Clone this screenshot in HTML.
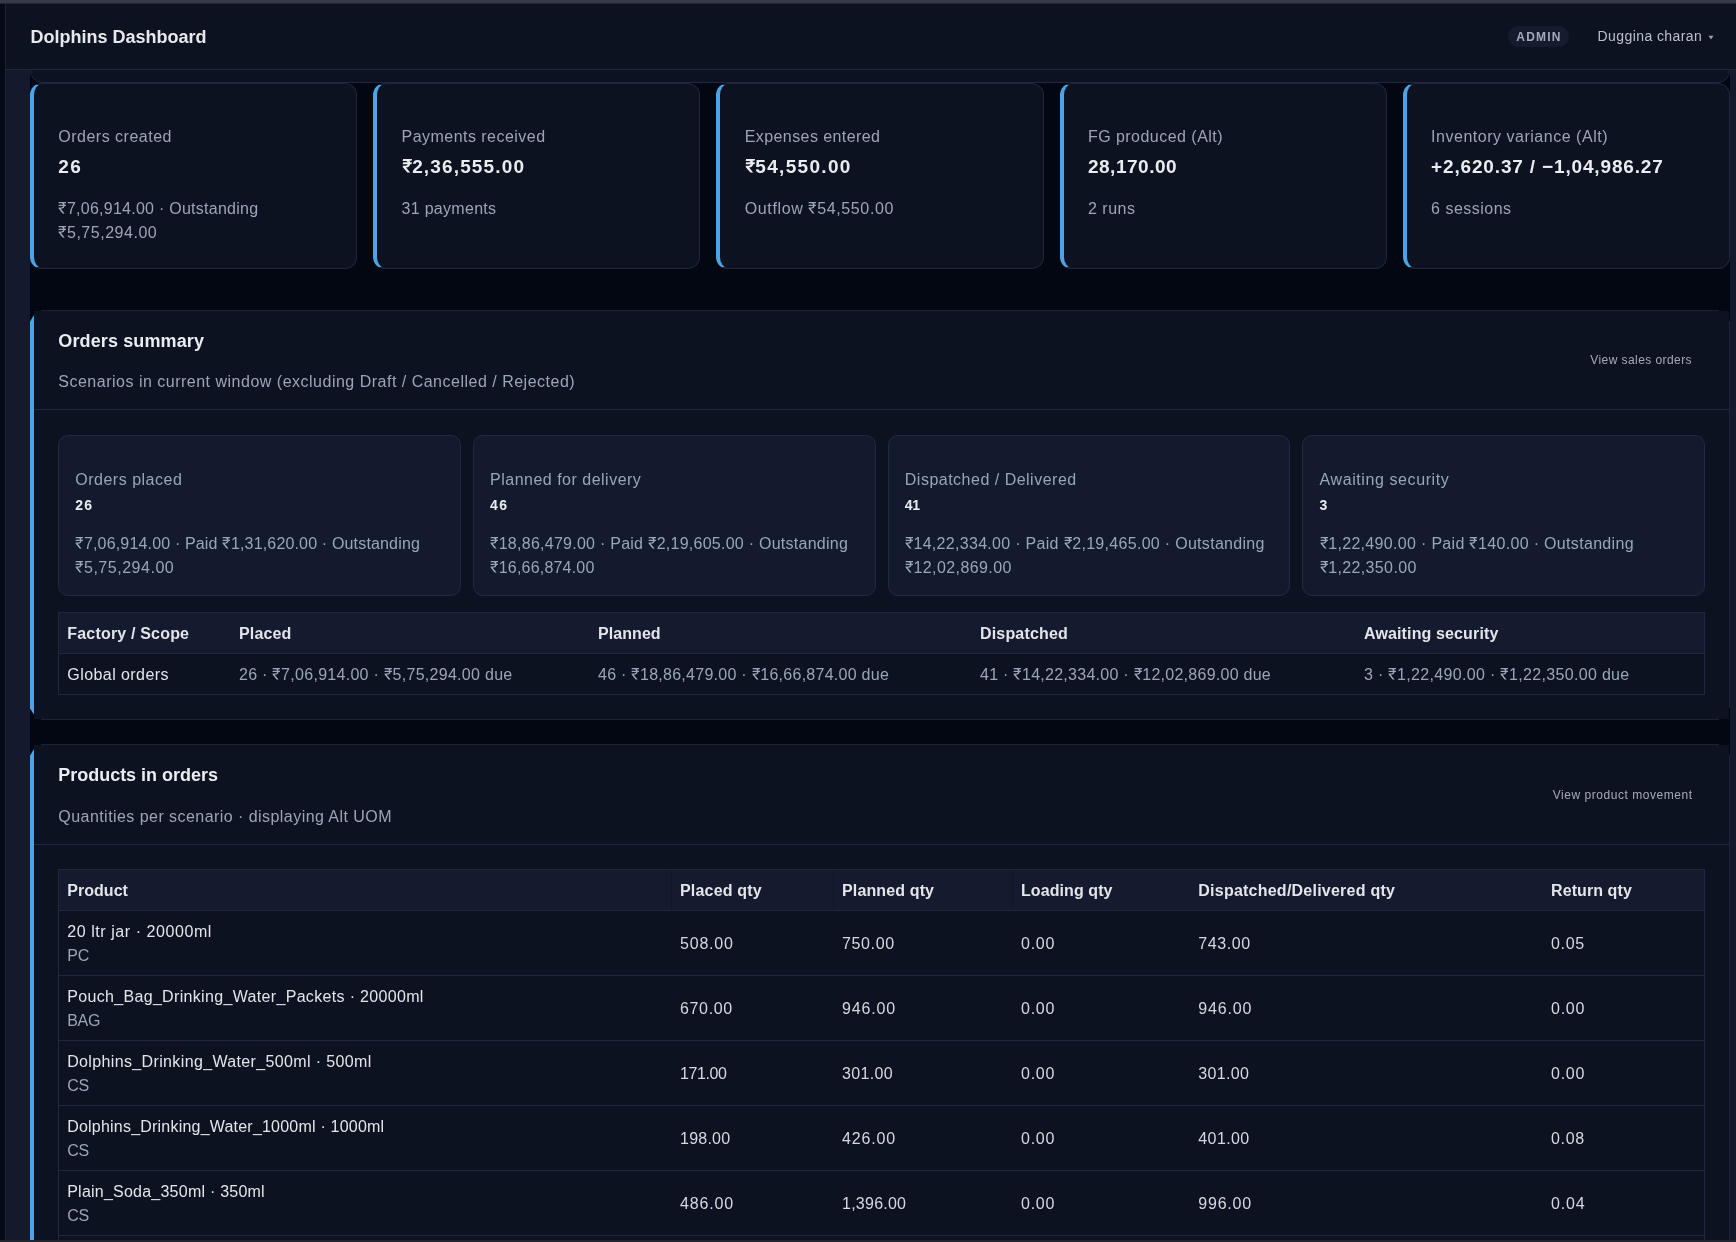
<!DOCTYPE html>
<html><head><meta charset="utf-8"><title>Dolphins Dashboard</title>
<style>
*{box-sizing:border-box;margin:0;padding:0}
html,body{width:1736px;height:1242px;overflow:hidden;background:#050a18;font-family:"Liberation Sans",sans-serif}
body{position:relative}
.a{position:absolute}
.t{position:absolute;white-space:nowrap}
svg.r{display:inline-block;vertical-align:baseline;fill:currentColor;overflow:visible}
.card{position:absolute;background:#0d1220;border:1px solid #1e2640;border-left:4px solid #4da3e6;border-radius:12px}
.sec{position:absolute;background:#0d1220;border:1px solid #1a2132;border-left:4px solid #4da3e6;border-radius:12px}
.stat{position:absolute;background:#141a2d;border:1px solid #212a42;border-radius:10px}
.blue{background:#4da3e6;clip-path:polygon(0 11.5px,100% 5px,100% calc(100% - 5.5px),0 calc(100% - 11.5px))}
.hl{position:absolute;height:1px;background:#20283f}
.vl{position:absolute;width:1px;background:#1f2740}
</style></head><body>
<svg width="0" height="0" style="position:absolute">
<defs>
<symbol id="rr" viewBox="0 -1490 1109 1490"><path transform="scale(1,-1)" d="M1053 1137H847C835 1205 809 1267 769 1319L1002 1317L1053 1490H109L58 1319H337C510 1319 611 1252 645 1137H108L58 964H650C620 837 509 774 337 774H73L77 648L606 0H841V12L354 610H359C675 610 821 764 850 964H1002Z"/></symbol>
<symbol id="rb" viewBox="0 -1490 1150 1490"><path transform="scale(1,-1)" d="M1084 1127H877C866 1191 844 1248 810 1297L1031 1296L1084 1490H124L67 1266H342C483 1266 565 1213 599 1127H120L67 935H606C575 834 485 774 342 774H88L90 613L600 0H900V13L440 578L449 580C714 612 845 743 876 935H1031Z"/></symbol>
</defs></svg>

<!-- chrome -->
<div class="a" style="left:0;top:0;width:1736px;height:3px;background:#353a48"></div>
<div class="a" style="left:0;top:3px;width:1736px;height:1px;background:#26272c"></div>
<div class="a" style="left:5px;top:4px;width:1px;height:1236px;background:#1f2335"></div>
<div class="a" style="left:6px;top:4px;width:1730px;height:65px;background:#0d1220"></div>
<div class="a" style="left:6px;top:69px;width:1730px;height:1px;background:#20283d"></div>
<div class="a" style="left:6px;top:70px;width:24px;height:1170px;background:#141a2d"></div>
<div class="a" style="left:1730px;top:70px;width:6px;height:1170px;background:#141a2d"></div>

<!-- main scroll area -->
<div class="a" style="left:30px;top:70px;width:1700px;height:1170px;background:#030712;overflow:hidden">
  <div class="a" style="left:0;top:-30px;width:1700px;height:43px;background:#0d1220;border:1px solid #1e2640;border-radius:12px"></div>
  <div class="card" style="left:0px;top:13px;width:327.2px;height:186px"></div>
  <div class="card" style="left:343.2px;top:13px;width:327.2px;height:186px"></div>
  <div class="card" style="left:686.4px;top:13px;width:327.2px;height:186px"></div>
  <div class="card" style="left:1029.6px;top:13px;width:327.2px;height:186px"></div>
  <div class="card" style="left:1372.8px;top:13px;width:327.2px;height:186px"></div>

</div>


<!-- sections -->
<div class="a" style="left:34px;top:311px;width:1695px;height:408px;background:#0d1220"></div>
<div class="a" style="left:41px;top:310px;width:1678px;height:1px;background:#1b2235"></div>
<div class="a" style="left:41px;top:719px;width:1678px;height:1px;background:#1b2235"></div>
<div class="a" style="left:1729px;top:321px;width:1px;height:387px;background:#1e2539"></div>
<div class="a blue" style="left:30px;top:310px;width:4px;height:410px"></div>
<div class="a" style="left:34px;top:745px;width:1695px;height:500px;background:#0d1220"></div>
<div class="a" style="left:41px;top:744px;width:1678px;height:1px;background:#1b2235"></div>
<div class="a" style="left:1729px;top:755px;width:1px;height:500px;background:#1e2539"></div>
<div class="a blue" style="left:30px;top:744px;width:4px;height:600px"></div>

<!-- section 1 internals -->
<div class="hl" style="left:34px;top:409px;width:1695px;background:#20283f"></div>
<div class="stat" style="left:58px;top:435px;width:402.75px;height:161px"></div>
<div class="stat" style="left:472.75px;top:435px;width:402.75px;height:161px"></div>
<div class="stat" style="left:887.5px;top:435px;width:402.75px;height:161px"></div>
<div class="stat" style="left:1302.25px;top:435px;width:402.75px;height:161px"></div>
<div class="a" style="left:58px;top:612px;width:1647px;height:83px;border:1px solid #20283f;background:#0d1220"></div>
<div class="a" style="left:59px;top:613px;width:1645px;height:40px;background:#151b2e"></div>
<div class="hl" style="left:59px;top:653px;width:1645px"></div>

<!-- section 2 internals -->
<div class="hl" style="left:34px;top:844px;width:1695px;background:#20283f"></div>
<div class="a" style="left:58px;top:869px;width:1647px;height:400px;border:1px solid #20283f;background:#0d1220"></div>
<div class="a" style="left:59px;top:870px;width:1645px;height:40px;background:#151b2e"></div>
<div class="hl" style="left:59px;top:910px;width:1645px"></div>
<div class="hl" style="left:59px;top:975px;width:1645px"></div>
<div class="hl" style="left:59px;top:1040px;width:1645px"></div>
<div class="hl" style="left:59px;top:1105px;width:1645px"></div>
<div class="hl" style="left:59px;top:1170px;width:1645px"></div>
<div class="hl" style="left:59px;top:1235px;width:1645px"></div>
<div class="vl" style="left:671px;top:870px;height:40px;background:#10162a"></div>
<div class="vl" style="left:833px;top:870px;height:40px;background:#10162a"></div>
<div class="vl" style="left:1012px;top:870px;height:40px;background:#10162a"></div>

<!-- header pill & caret -->
<div class="a" style="left:1508px;top:26px;width:61px;height:21px;border-radius:11px;background:#161c2d"></div>
<svg class="a" style="left:1708px;top:35px" width="6" height="5" viewBox="0 0 6 5"><path d="M0.5 0.8H5.5L3 4.4Z" fill="#9aa2ae"/></svg>

<div class="a" style="left:0;top:0;width:1736px;height:1242px;will-change:transform">
<div class="t" style="left:30.50px;top:26.00px;font-size:18px;line-height:22px;font-weight:700;color:#e6e8ec;letter-spacing:0.000px">Dolphins Dashboard</div>
<div class="t" style="left:1516.30px;top:29.00px;font-size:12px;line-height:16px;font-weight:700;color:#a3abb8;letter-spacing:1.216px">ADMIN</div>
<div class="t" style="left:1597.60px;top:27.00px;font-size:14px;line-height:18px;font-weight:400;color:#b9c0cb;letter-spacing:0.407px">Duggina charan</div>
<div class="t" style="left:58.30px;top:127.00px;font-size:16px;line-height:20px;font-weight:400;color:#9aa5b7;letter-spacing:0.496px">Orders created</div>
<div class="t" style="left:58.30px;top:155.00px;font-size:19px;line-height:23px;font-weight:700;color:#e9ecf1;letter-spacing:1.430px">26</div>
<div class="t" style="left:58.30px;top:199.00px;font-size:16px;line-height:20px;font-weight:400;color:#9aa5b7;letter-spacing:0.253px"><svg class="r" style="width:8.66px;height:11.64px"><use href="#rr"/></svg>7,06,914.00 · Outstanding</div>
<div class="t" style="left:58.30px;top:223.00px;font-size:16px;line-height:20px;font-weight:400;color:#9aa5b7;letter-spacing:0.529px"><svg class="r" style="width:8.66px;height:11.64px"><use href="#rr"/></svg>5,75,294.00</div>
<div class="t" style="left:401.50px;top:127.00px;font-size:16px;line-height:20px;font-weight:400;color:#9aa5b7;letter-spacing:0.468px">Payments received</div>
<div class="t" style="left:401.50px;top:155.00px;font-size:19px;line-height:23px;font-weight:700;color:#e9ecf1;letter-spacing:1.144px"><svg class="r" style="width:10.67px;height:13.82px"><use href="#rb"/></svg>2,36,555.00</div>
<div class="t" style="left:401.50px;top:199.00px;font-size:16px;line-height:20px;font-weight:400;color:#9aa5b7;letter-spacing:0.300px">31 payments</div>
<div class="t" style="left:744.70px;top:127.00px;font-size:16px;line-height:20px;font-weight:400;color:#9aa5b7;letter-spacing:0.421px">Expenses entered</div>
<div class="t" style="left:744.70px;top:155.00px;font-size:19px;line-height:23px;font-weight:700;color:#e9ecf1;letter-spacing:1.313px"><svg class="r" style="width:10.67px;height:13.82px"><use href="#rb"/></svg>54,550.00</div>
<div class="t" style="left:744.70px;top:199.00px;font-size:16px;line-height:20px;font-weight:400;color:#9aa5b7;letter-spacing:0.636px">Outflow <svg class="r" style="width:8.66px;height:11.64px"><use href="#rr"/></svg>54,550.00</div>
<div class="t" style="left:1087.90px;top:127.00px;font-size:16px;line-height:20px;font-weight:400;color:#9aa5b7;letter-spacing:0.468px">FG produced (Alt)</div>
<div class="t" style="left:1087.90px;top:155.00px;font-size:19px;line-height:23px;font-weight:700;color:#e9ecf1;letter-spacing:0.524px">28,170.00</div>
<div class="t" style="left:1087.90px;top:199.00px;font-size:16px;line-height:20px;font-weight:400;color:#9aa5b7;letter-spacing:0.529px">2 runs</div>
<div class="t" style="left:1431.10px;top:127.00px;font-size:16px;line-height:20px;font-weight:400;color:#9aa5b7;letter-spacing:0.517px">Inventory variance (Alt)</div>
<div class="t" style="left:1431.10px;top:155.00px;font-size:19px;line-height:23px;font-weight:700;color:#e9ecf1;letter-spacing:0.841px">+2,620.37 / −1,04,986.27</div>
<div class="t" style="left:1431.10px;top:199.00px;font-size:16px;line-height:20px;font-weight:400;color:#9aa5b7;letter-spacing:0.486px">6 sessions</div>
<div class="t" style="left:58.30px;top:330.00px;font-size:18px;line-height:22px;font-weight:700;color:#e9ecf1;letter-spacing:0.117px">Orders summary</div>
<div class="t" style="left:58.30px;top:372.00px;font-size:16px;line-height:20px;font-weight:400;color:#9aa5b7;letter-spacing:0.499px">Scenarios in current window (excluding Draft / Cancelled / Rejected)</div>
<div class="t" style="left:1590.25px;top:351.50px;font-size:12px;line-height:16px;font-weight:400;color:#a3abb8;letter-spacing:0.428px">View sales orders</div>
<div class="t" style="left:75.30px;top:470.00px;font-size:16px;line-height:20px;font-weight:400;color:#9aa5b7;letter-spacing:0.501px">Orders placed</div>
<div class="t" style="left:75.30px;top:495.50px;font-size:14px;line-height:18px;font-weight:700;color:#e9ecf1;letter-spacing:1.055px">26</div>
<div class="t" style="left:75.30px;top:534.00px;font-size:16px;line-height:20px;font-weight:400;color:#9aa5b7;letter-spacing:0.163px"><svg class="r" style="width:8.66px;height:11.64px"><use href="#rr"/></svg>7,06,914.00 · Paid <svg class="r" style="width:8.66px;height:11.64px"><use href="#rr"/></svg>1,31,620.00 · Outstanding</div>
<div class="t" style="left:75.30px;top:558.00px;font-size:16px;line-height:20px;font-weight:400;color:#9aa5b7;letter-spacing:0.529px"><svg class="r" style="width:8.66px;height:11.64px"><use href="#rr"/></svg>5,75,294.00</div>
<div class="t" style="left:490.05px;top:470.00px;font-size:16px;line-height:20px;font-weight:400;color:#9aa5b7;letter-spacing:0.495px">Planned for delivery</div>
<div class="t" style="left:490.05px;top:495.50px;font-size:14px;line-height:18px;font-weight:700;color:#e9ecf1;letter-spacing:1.352px">46</div>
<div class="t" style="left:490.05px;top:534.00px;font-size:16px;line-height:20px;font-weight:400;color:#9aa5b7;letter-spacing:0.258px"><svg class="r" style="width:8.66px;height:11.64px"><use href="#rr"/></svg>18,86,479.00 · Paid <svg class="r" style="width:8.66px;height:11.64px"><use href="#rr"/></svg>2,19,605.00 · Outstanding</div>
<div class="t" style="left:490.05px;top:558.00px;font-size:16px;line-height:20px;font-weight:400;color:#9aa5b7;letter-spacing:0.204px"><svg class="r" style="width:8.66px;height:11.64px"><use href="#rr"/></svg>16,66,874.00</div>
<div class="t" style="left:904.80px;top:470.00px;font-size:16px;line-height:20px;font-weight:400;color:#9aa5b7;letter-spacing:0.496px">Dispatched / Delivered</div>
<div class="t" style="left:904.80px;top:495.50px;font-size:14px;line-height:18px;font-weight:700;color:#e9ecf1;letter-spacing:-0.383px">41</div>
<div class="t" style="left:904.80px;top:534.00px;font-size:16px;line-height:20px;font-weight:400;color:#9aa5b7;letter-spacing:0.300px"><svg class="r" style="width:8.66px;height:11.64px"><use href="#rr"/></svg>14,22,334.00 · Paid <svg class="r" style="width:8.66px;height:11.64px"><use href="#rr"/></svg>2,19,465.00 · Outstanding</div>
<div class="t" style="left:904.80px;top:558.00px;font-size:16px;line-height:20px;font-weight:400;color:#9aa5b7;letter-spacing:0.407px"><svg class="r" style="width:8.66px;height:11.64px"><use href="#rr"/></svg>12,02,869.00</div>
<div class="t" style="left:1319.55px;top:470.00px;font-size:16px;line-height:20px;font-weight:400;color:#9aa5b7;letter-spacing:0.593px">Awaiting security</div>
<div class="t" style="left:1319.55px;top:495.50px;font-size:14px;line-height:18px;font-weight:700;color:#e9ecf1;letter-spacing:1.125px">3</div>
<div class="t" style="left:1319.55px;top:534.00px;font-size:16px;line-height:20px;font-weight:400;color:#9aa5b7;letter-spacing:0.317px"><svg class="r" style="width:8.66px;height:11.64px"><use href="#rr"/></svg>1,22,490.00 · Paid <svg class="r" style="width:8.66px;height:11.64px"><use href="#rr"/></svg>140.00 · Outstanding</div>
<div class="t" style="left:1319.55px;top:558.00px;font-size:16px;line-height:20px;font-weight:400;color:#9aa5b7;letter-spacing:0.362px"><svg class="r" style="width:8.66px;height:11.64px"><use href="#rr"/></svg>1,22,350.00</div>
<div class="t" style="left:67.30px;top:624.00px;font-size:16px;line-height:20px;font-weight:700;color:#e2e5ea;letter-spacing:0.183px">Factory / Scope</div>
<div class="t" style="left:239.00px;top:624.00px;font-size:16px;line-height:20px;font-weight:700;color:#e2e5ea;letter-spacing:0.146px">Placed</div>
<div class="t" style="left:598.00px;top:624.00px;font-size:16px;line-height:20px;font-weight:700;color:#e2e5ea;letter-spacing:0.069px">Planned</div>
<div class="t" style="left:980.00px;top:624.00px;font-size:16px;line-height:20px;font-weight:700;color:#e2e5ea;letter-spacing:0.167px">Dispatched</div>
<div class="t" style="left:1364.00px;top:624.00px;font-size:16px;line-height:20px;font-weight:700;color:#e2e5ea;letter-spacing:0.134px">Awaiting security</div>
<div class="t" style="left:67.30px;top:665.00px;font-size:16px;line-height:20px;font-weight:400;color:#e2e5ea;letter-spacing:0.433px">Global orders</div>
<div class="t" style="left:239.00px;top:665.00px;font-size:16px;line-height:20px;font-weight:400;color:#9aa5b7;letter-spacing:0.287px">26 · <svg class="r" style="width:8.66px;height:11.64px"><use href="#rr"/></svg>7,06,914.00 · <svg class="r" style="width:8.66px;height:11.64px"><use href="#rr"/></svg>5,75,294.00 due</div>
<div class="t" style="left:598.00px;top:665.00px;font-size:16px;line-height:20px;font-weight:400;color:#9aa5b7;letter-spacing:0.265px">46 · <svg class="r" style="width:8.66px;height:11.64px"><use href="#rr"/></svg>18,86,479.00 · <svg class="r" style="width:8.66px;height:11.64px"><use href="#rr"/></svg>16,66,874.00 due</div>
<div class="t" style="left:980.00px;top:665.00px;font-size:16px;line-height:20px;font-weight:400;color:#9aa5b7;letter-spacing:0.263px">41 · <svg class="r" style="width:8.66px;height:11.64px"><use href="#rr"/></svg>14,22,334.00 · <svg class="r" style="width:8.66px;height:11.64px"><use href="#rr"/></svg>12,02,869.00 due</div>
<div class="t" style="left:1364.00px;top:665.00px;font-size:16px;line-height:20px;font-weight:400;color:#9aa5b7;letter-spacing:0.325px">3 · <svg class="r" style="width:8.66px;height:11.64px"><use href="#rr"/></svg>1,22,490.00 · <svg class="r" style="width:8.66px;height:11.64px"><use href="#rr"/></svg>1,22,350.00 due</div>
<div class="t" style="left:58.30px;top:764.00px;font-size:18px;line-height:22px;font-weight:700;color:#e9ecf1;letter-spacing:-0.025px">Products in orders</div>
<div class="t" style="left:58.30px;top:807.00px;font-size:16px;line-height:20px;font-weight:400;color:#9aa5b7;letter-spacing:0.448px">Quantities per scenario · displaying Alt UOM</div>
<div class="t" style="left:1552.68px;top:786.50px;font-size:12px;line-height:16px;font-weight:400;color:#a3abb8;letter-spacing:0.540px">View product movement</div>
<div class="t" style="left:67.20px;top:880.50px;font-size:16px;line-height:20px;font-weight:700;color:#e2e5ea;letter-spacing:0.051px">Product</div>
<div class="t" style="left:680.00px;top:880.50px;font-size:16px;line-height:20px;font-weight:700;color:#e2e5ea;letter-spacing:0.186px">Placed qty</div>
<div class="t" style="left:842.00px;top:880.50px;font-size:16px;line-height:20px;font-weight:700;color:#e2e5ea;letter-spacing:0.132px">Planned qty</div>
<div class="t" style="left:1021.00px;top:880.50px;font-size:16px;line-height:20px;font-weight:700;color:#e2e5ea;letter-spacing:0.080px">Loading qty</div>
<div class="t" style="left:1198.30px;top:880.50px;font-size:16px;line-height:20px;font-weight:700;color:#e2e5ea;letter-spacing:0.234px">Dispatched/Delivered qty</div>
<div class="t" style="left:1551.00px;top:880.50px;font-size:16px;line-height:20px;font-weight:700;color:#e2e5ea;letter-spacing:0.086px">Return qty</div>
<div class="t" style="left:67.20px;top:922.00px;font-size:16px;line-height:20px;font-weight:400;color:#e2e5ea;letter-spacing:0.567px">20 ltr jar · 20000ml</div>
<div class="t" style="left:67.20px;top:946.00px;font-size:16px;line-height:20px;font-weight:400;color:#9aa5b7;letter-spacing:-0.164px">PC</div>
<div class="t" style="left:680.00px;top:933.50px;font-size:16px;line-height:20px;font-weight:400;color:#d5d9df;letter-spacing:0.802px">508.00</div>
<div class="t" style="left:842.00px;top:933.50px;font-size:16px;line-height:20px;font-weight:400;color:#d5d9df;letter-spacing:0.628px">750.00</div>
<div class="t" style="left:1021.00px;top:933.50px;font-size:16px;line-height:20px;font-weight:400;color:#d5d9df;letter-spacing:0.734px">0.00</div>
<div class="t" style="left:1198.30px;top:933.50px;font-size:16px;line-height:20px;font-weight:400;color:#d5d9df;letter-spacing:0.573px">743.00</div>
<div class="t" style="left:1551.00px;top:933.50px;font-size:16px;line-height:20px;font-weight:400;color:#d5d9df;letter-spacing:0.645px">0.05</div>
<div class="t" style="left:67.20px;top:987.00px;font-size:16px;line-height:20px;font-weight:400;color:#e2e5ea;letter-spacing:0.330px">Pouch_Bag_Drinking_Water_Packets · 20000ml</div>
<div class="t" style="left:67.20px;top:1011.00px;font-size:16px;line-height:20px;font-weight:400;color:#9aa5b7;letter-spacing:-0.297px">BAG</div>
<div class="t" style="left:680.00px;top:998.50px;font-size:16px;line-height:20px;font-weight:400;color:#d5d9df;letter-spacing:0.646px">670.00</div>
<div class="t" style="left:842.00px;top:998.50px;font-size:16px;line-height:20px;font-weight:400;color:#d5d9df;letter-spacing:0.849px">946.00</div>
<div class="t" style="left:1021.00px;top:998.50px;font-size:16px;line-height:20px;font-weight:400;color:#d5d9df;letter-spacing:0.734px">0.00</div>
<div class="t" style="left:1198.30px;top:998.50px;font-size:16px;line-height:20px;font-weight:400;color:#d5d9df;letter-spacing:0.849px">946.00</div>
<div class="t" style="left:1551.00px;top:998.50px;font-size:16px;line-height:20px;font-weight:400;color:#d5d9df;letter-spacing:0.734px">0.00</div>
<div class="t" style="left:67.20px;top:1052.00px;font-size:16px;line-height:20px;font-weight:400;color:#e2e5ea;letter-spacing:0.360px">Dolphins_Drinking_Water_500ml · 500ml</div>
<div class="t" style="left:67.20px;top:1076.00px;font-size:16px;line-height:20px;font-weight:400;color:#9aa5b7;letter-spacing:-0.141px">CS</div>
<div class="t" style="left:680.00px;top:1063.50px;font-size:16px;line-height:20px;font-weight:400;color:#d5d9df;letter-spacing:-0.411px">171.00</div>
<div class="t" style="left:842.00px;top:1063.50px;font-size:16px;line-height:20px;font-weight:400;color:#d5d9df;letter-spacing:0.323px">301.00</div>
<div class="t" style="left:1021.00px;top:1063.50px;font-size:16px;line-height:20px;font-weight:400;color:#d5d9df;letter-spacing:0.734px">0.00</div>
<div class="t" style="left:1198.30px;top:1063.50px;font-size:16px;line-height:20px;font-weight:400;color:#d5d9df;letter-spacing:0.323px">301.00</div>
<div class="t" style="left:1551.00px;top:1063.50px;font-size:16px;line-height:20px;font-weight:400;color:#d5d9df;letter-spacing:0.734px">0.00</div>
<div class="t" style="left:67.20px;top:1117.00px;font-size:16px;line-height:20px;font-weight:400;color:#e2e5ea;letter-spacing:0.212px">Dolphins_Drinking_Water_1000ml · 1000ml</div>
<div class="t" style="left:67.20px;top:1141.00px;font-size:16px;line-height:20px;font-weight:400;color:#9aa5b7;letter-spacing:-0.141px">CS</div>
<div class="t" style="left:680.00px;top:1128.50px;font-size:16px;line-height:20px;font-weight:400;color:#d5d9df;letter-spacing:0.237px">198.00</div>
<div class="t" style="left:842.00px;top:1128.50px;font-size:16px;line-height:20px;font-weight:400;color:#d5d9df;letter-spacing:0.823px">426.00</div>
<div class="t" style="left:1021.00px;top:1128.50px;font-size:16px;line-height:20px;font-weight:400;color:#d5d9df;letter-spacing:0.734px">0.00</div>
<div class="t" style="left:1198.30px;top:1128.50px;font-size:16px;line-height:20px;font-weight:400;color:#d5d9df;letter-spacing:0.398px">401.00</div>
<div class="t" style="left:1551.00px;top:1128.50px;font-size:16px;line-height:20px;font-weight:400;color:#d5d9df;letter-spacing:0.688px">0.08</div>
<div class="t" style="left:67.20px;top:1182.00px;font-size:16px;line-height:20px;font-weight:400;color:#e2e5ea;letter-spacing:0.233px">Plain_Soda_350ml · 350ml</div>
<div class="t" style="left:67.20px;top:1206.00px;font-size:16px;line-height:20px;font-weight:400;color:#9aa5b7;letter-spacing:-0.141px">CS</div>
<div class="t" style="left:680.00px;top:1193.50px;font-size:16px;line-height:20px;font-weight:400;color:#d5d9df;letter-spacing:0.846px">486.00</div>
<div class="t" style="left:842.00px;top:1193.50px;font-size:16px;line-height:20px;font-weight:400;color:#d5d9df;letter-spacing:0.248px">1,396.00</div>
<div class="t" style="left:1021.00px;top:1193.50px;font-size:16px;line-height:20px;font-weight:400;color:#d5d9df;letter-spacing:0.734px">0.00</div>
<div class="t" style="left:1198.30px;top:1193.50px;font-size:16px;line-height:20px;font-weight:400;color:#d5d9df;letter-spacing:0.781px">996.00</div>
<div class="t" style="left:1551.00px;top:1193.50px;font-size:16px;line-height:20px;font-weight:400;color:#d5d9df;letter-spacing:0.797px">0.04</div>
</div>

<div class="a" style="left:0;top:1240px;width:1736px;height:2px;background:#22262c"></div>
</body></html>
